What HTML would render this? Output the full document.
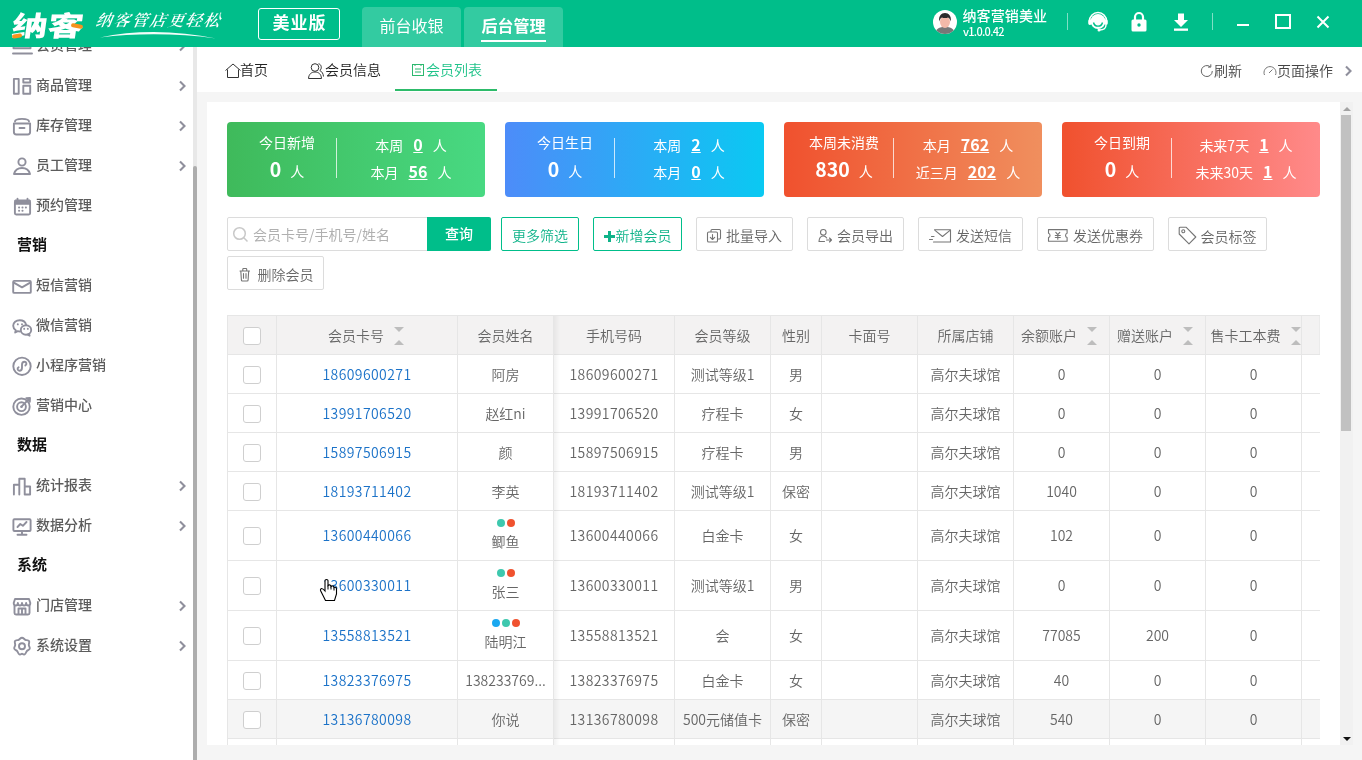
<!DOCTYPE html>
<html lang="zh-CN">
<head>
<meta charset="utf-8">
<title>纳客 - 会员列表</title>
<style>
*{box-sizing:border-box;margin:0;padding:0}
html,body{width:1362px;height:760px;overflow:hidden;background:#f5f5f5}
#hdr,#side,#tabs,#panel{will-change:transform}
body{font-family:"Liberation Sans","Noto Sans CJK SC",sans-serif;font-size:14px;color:#555;position:relative}
.abs{position:absolute}
/* header */
#hdr{position:absolute;left:0;top:0;width:1362px;height:47px;background:#00be8a;z-index:20}
#hdr .ver{position:absolute;left:258px;top:8px;width:82px;height:32px;border:1px solid #fff;border-radius:3px;color:#fff;font-weight:700;font-size:17px;letter-spacing:1px;padding-left:1px;line-height:30px;text-align:center}
#hdr .tab{position:absolute;top:7px;height:40px;width:99px;background:rgba(255,255,255,.2);border-radius:4px 4px 0 0;color:#fff;font-size:16px;line-height:39px;text-align:center}
#hdr .tab.on{font-weight:700}
#hdr .tab.on i{position:absolute;left:17px;right:17px;bottom:5px;height:2px;background:#fff}
#hdr .uname{position:absolute;left:962.500px;top:5.500px;color:#fff;font-size:14px;line-height:20px;font-weight:500;letter-spacing:.1px}
#hdr .uver{position:absolute;left:963px;top:24px;color:#fff;font-family:"Noto Sans CJK SC","Liberation Sans",sans-serif;font-size:11px;line-height:14px;font-weight:500;letter-spacing:-.7px}
#hdr .sep{position:absolute;top:13px;width:1px;height:17px;background:rgba(255,255,255,.5)}
/* sidebar */
#side{position:absolute;left:0;top:47px;width:193px;height:713px;background:#fff;overflow:hidden}
#side .it{position:absolute;left:0;width:193px;height:40px;line-height:40px;color:#5c5c5c;font-weight:500;font-size:14px;padding-left:36px}
#side .it svg.ic{position:absolute;left:11px;top:10px;width:22px;height:22px}
#side .it .ar{position:absolute;left:177px;top:15px;width:10px;height:12px}
#side .gp{position:absolute;left:17px;height:40px;line-height:40px;color:#111;font-weight:700;font-size:15px}
#sscroll{position:absolute;left:193px;top:47px;width:4px;height:713px;background:#e8e8e8}
#sscroll i{position:absolute;left:0;top:119px;width:4px;height:594px;background:#adadad;border-radius:2px 2px 0 0}
/* tabbar */
#tabs{position:absolute;left:197px;top:47px;width:1165px;height:45px;background:#fff}
#tabs .t{position:absolute;top:0;height:45px;line-height:45px;color:#222;font-size:14px;font-weight:350;white-space:nowrap;font-family:"Noto Sans CJK SC","Liberation Sans",sans-serif}
#tabs .t.on{color:#1fc389}
#tabs .ul{position:absolute;left:198px;top:42px;width:102px;height:2px;background:#2dbb6a}
/* panel */
#panel{position:absolute;left:207px;top:102px;width:1133px;height:643px;background:#fff;overflow:hidden}
#vscroll{position:absolute;left:1340px;top:102px;width:13px;height:643px;background:#f1f1f1}
#vscroll i{position:absolute;left:1px;top:13px;width:10px;height:316px;background:#c1c1c1}
#vscroll b{position:absolute;left:3px;width:0;height:0;border-left:4px solid transparent;border-right:4px solid transparent}
#vscroll .up{top:5px;border-bottom:4px solid #a3a3a3}
#vscroll .dn{top:635px;border-top:4px solid #111}
/* cards (coords relative to panel) */
.card{font-family:"Noto Sans CJK SC","Liberation Sans",sans-serif;position:absolute;top:20px;width:258px;height:75px;border-radius:4px;color:#fff}
.card .v{position:absolute;left:109px;top:16px;width:1px;height:40px;background:rgba(255,255,255,.75)}
.card .a{position:absolute;left:0;width:120px;text-align:center;white-space:nowrap}
.card .b{position:absolute;left:110px;width:148px;text-align:center;white-space:nowrap;font-size:14px}
.card b{font-weight:700}
.card u{font-weight:700;font-size:16px;text-decoration:underline;margin:0 10px}
/* toolbar */
.btn{font-weight:350;position:absolute;height:34px;border:1px solid #dcdcdc;border-radius:2px;background:#fff;color:#666;font-size:14px;line-height:35px;text-align:center;white-space:nowrap;font-family:"Noto Sans CJK SC","Liberation Sans",sans-serif}
.btn.g{border-color:#00be8a;color:#0fb389}
.plus{display:inline-block;position:relative;width:11px;height:11px;margin-right:1px;vertical-align:-1px}
.plus:before,.plus:after{content:"";position:absolute;background:#0fb389}
.plus:before{left:0;top:4px;width:11px;height:3px}
.plus:after{left:4px;top:0;width:3px;height:11px}
/* table */
#tbl{position:absolute;left:20px;top:213px;width:1093px;overflow:hidden;height:440px;border-left:1px solid #e6e6e6;border-top:1px solid #e6e6e6}
.r{position:absolute;left:0;width:1092px;border-bottom:1px solid #e6e6e6}
.r.h{background:#f3f2f2}
.r.hv{background:#f5f5f5}
.c{font-family:"Noto Sans CJK SC","Liberation Sans",sans-serif;position:absolute;top:0;height:100%;border-right:1px solid #e6e6e6;text-align:center;white-space:nowrap;overflow:hidden;color:#666;font-weight:350}
.c a{color:#1b72c8;text-decoration:none}
.cb{position:absolute;left:15px;width:18px;height:18px;border:1px solid #cfcfcf;border-radius:3px;background:#fff}

#hdr .logo{position:absolute;left:9px;top:7px;height:40px;width:80px}
#hdr .logo .lg{position:absolute;left:3px;top:0;color:#fff;font-weight:900;font-size:27.500px;line-height:40px;letter-spacing:0;transform:skewX(-8deg) scaleX(1.3);transform-origin:0 50%;white-space:nowrap}
#hdr .logo .o1{position:absolute;left:3px;top:27px;width:10px;height:3.500px;background:#f7931e;border-radius:2px;transform:rotate(-10deg)}
#hdr .logo .o2{position:absolute;left:62px;top:16.500px;width:12px;height:4px;background:#f7931e;border-radius:2px;transform:rotate(10deg)}
#hdr .slogan{position:absolute;left:96px;top:10px;color:#fff;font-family:"Liberation Serif","Noto Serif CJK SC",serif;font-style:italic;font-weight:600;font-size:16px;line-height:22px;letter-spacing:2px;white-space:nowrap;transform:skewX(-10deg)}
.st{display:inline-block;position:relative;width:10px;height:20px;vertical-align:middle;margin-left:10px;top:-1px}
.st i{position:absolute;left:0;border-left:5px solid transparent;border-right:5px solid transparent}
.st .d{top:1px;border-top:5px solid #bdbdbd}
.st .u{top:14px;border-bottom:5px solid #bdbdbd}
.dots{display:block;height:10px;line-height:10px;font-size:0}
.dots i{display:inline-block;width:8px;height:8px;border-radius:50%;margin:1px 1px 0;vertical-align:top}
.nf{font-family:"Noto Sans CJK SC","Liberation Sans",sans-serif}
</style>
</head>
<body>
<div id="hdr"><div class="logo"><span class="lg">纳客</span><i class="o1"></i><i class="o2"></i></div><div class="slogan">纳客管店更轻松</div><svg class="abs" style="left:96px;top:28px" width="130" height="14" viewBox="0 0 130 14"><path d="M4 9.500C40 1.500 82 2.500 120 10.500 82 5.200 40 5 4 9.500z" fill="#fff" opacity=".95"/></svg><div class="ver">美业版</div><div class="tab" style="left:362px">前台收银</div><div class="tab on" style="left:464px">后台管理<i></i></div><svg class="abs" style="left:932px;top:9px" width="26" height="26" viewBox="0 0 26 26"><defs><clipPath id="avc"><circle cx="13" cy="13" r="12"/></clipPath></defs><circle cx="13" cy="13" r="12" fill="#fff"/><g clip-path="url(#avc)"><path d="M3 26c0-6 4-8 10-8s10 2 10 8z" fill="#777"/><ellipse cx="13" cy="13" rx="5" ry="6" fill="#f3b9a9"/><path d="M7.300 12.500c-1-5.500 2-8.500 5.700-8.500s6.700 3 5.700 8.500c-.6-2.500-1.500-3.500-2.700-4-1.500.8-4.500.8-6 0-1.200.5-2.100 1.500-2.700 4z" fill="#2c2c2c"/></g></svg><div class="uname">纳客营销美业</div><div class="uver">v1.0.0.42</div><div class="sep" style="left:1067px"></div><svg class="abs" style="left:1086px;top:10px" width="24" height="24" viewBox="0 0 24 24"><circle cx="12" cy="11.500" r="7.500" fill="#fff"/><path d="M3.500 13v-2a8.500 8.500 0 0 1 17 0v2" stroke="#fff" stroke-width="1.600" fill="none"/><rect x="2.300" y="9.500" width="3.200" height="5.500" rx="1.400" fill="#fff"/><rect x="18.500" y="9.500" width="3.200" height="5.500" rx="1.400" fill="#fff"/><path d="M7.500 12.500a4.600 4.600 0 0 0 9 0" stroke="#00be8a" stroke-width="1.400" fill="none"/><path d="M20 15c0 3.500-3 5-6.500 5" stroke="#fff" stroke-width="1.400" fill="none"/><circle cx="13" cy="20" r="1.500" fill="#fff"/></svg><svg class="abs" style="left:1129px;top:10px" width="20" height="24" viewBox="0 0 20 24"><path d="M6 10v-3a4 4 0 0 1 8 0v3" stroke="#fff" stroke-width="2.200" fill="none"/><rect x="2.500" y="9.500" width="15" height="12" rx="1.500" fill="#fff"/><circle cx="10" cy="15" r="1.700" fill="#00be8a"/></svg><svg class="abs" style="left:1171px;top:10px" width="20" height="24" viewBox="0 0 20 24"><path d="M7 3.500h6v6.500h4l-7 7-7-7h4z" fill="#fff"/><rect x="3" y="18.500" width="14" height="2.300" fill="#fff"/></svg><div class="sep" style="left:1212px"></div><div class="abs" style="left:1237px;top:24px;width:12px;height:2px;background:#fff"></div><div class="abs" style="left:1275px;top:14px;width:16px;height:15px;border:2px solid #fff"></div><svg class="abs" style="left:1316px;top:15px" width="14" height="14" viewBox="0 0 14 14"><path d="M1.500 1.500l11 11M12.500 1.500l-11 11" stroke="#fff" stroke-width="2" fill="none"/></svg></div>
<div id="side"><div class="it" style="top:-22px"><svg class="ic" viewBox="0 0 22 22"><path d="M2.500 11v2.300h17v-2.300" stroke="#8f8f9c" stroke-width="1.900" fill="none" stroke-linecap="round" stroke-linejoin="round"/><path d="M2 18.500h19" stroke="#8f8f9c" stroke-width="1.900" fill="none" stroke-linecap="round" stroke-linejoin="round" stroke-width="2.800" stroke-linecap="butt"/></svg>会员管理<svg class="ar" viewBox="0 0 10 12"><path d="M3 1.500l4.500 4.500-4.500 4.500" stroke="#8f8f9c" stroke-width="2.100" fill="none"/></svg></div><div class="it" style="top:18px"><svg class="ic" viewBox="0 0 22 22"><rect x="2.900" y="3.900" width="4.800" height="14.800" stroke="#8f8f9c" stroke-width="1.900" fill="none" stroke-linecap="round" stroke-linejoin="round"/><rect x="12.300" y="3.900" width="6.900" height="3.600" stroke="#8f8f9c" stroke-width="1.900" fill="none" stroke-linecap="round" stroke-linejoin="round"/><rect x="12.300" y="10.800" width="6.900" height="7.900" stroke="#8f8f9c" stroke-width="1.900" fill="none" stroke-linecap="round" stroke-linejoin="round"/></svg>商品管理<svg class="ar" viewBox="0 0 10 12"><path d="M3 1.500l4.500 4.500-4.500 4.500" stroke="#8f8f9c" stroke-width="2.100" fill="none"/></svg></div><div class="it" style="top:58px"><svg class="ic" viewBox="0 0 22 22"><path d="M4 6.500c0-3.500 14-3.500 14 0" stroke="#8f8f9c" stroke-width="1.900" fill="none" stroke-linecap="round" stroke-linejoin="round" stroke-width="2.200"/><path d="M2.900 8.500h16.200v8.500a2.500 2.500 0 0 1-2.500 2.500h-11.200a2.500 2.500 0 0 1-2.500-2.500z" stroke="#8f8f9c" stroke-width="1.900" fill="none" stroke-linecap="round" stroke-linejoin="round"/><path d="M8.500 13h5" stroke="#8f8f9c" stroke-width="1.900" fill="none" stroke-linecap="round" stroke-linejoin="round" stroke-width="2.400"/></svg>库存管理<svg class="ar" viewBox="0 0 10 12"><path d="M3 1.500l4.500 4.500-4.500 4.500" stroke="#8f8f9c" stroke-width="2.100" fill="none"/></svg></div><div class="it" style="top:98px"><svg class="ic" viewBox="0 0 22 22"><circle cx="11" cy="7" r="3.600" stroke="#8f8f9c" stroke-width="1.900" fill="none" stroke-linecap="round" stroke-linejoin="round"/><path d="M3 19c1.200-4.500 4-6 8-6s6.800 1.500 8 6z" stroke="#8f8f9c" stroke-width="1.900" fill="none" stroke-linecap="round" stroke-linejoin="round"/></svg>员工管理<svg class="ar" viewBox="0 0 10 12"><path d="M3 1.500l4.500 4.500-4.500 4.500" stroke="#8f8f9c" stroke-width="2.100" fill="none"/></svg></div><div class="it" style="top:138px"><svg class="ic" viewBox="0 0 22 22"><rect x="3.900" y="6" width="15.200" height="13.500" rx="1.200" stroke="#8f8f9c" stroke-width="1.900" fill="none" stroke-linecap="round" stroke-linejoin="round"/><path d="M3.900 5h15.200v4.200h-15.200z" fill="#8f8f9c" stroke="#8f8f9c" stroke-width="1" stroke-linejoin="round"/><path d="M6.500 3.800v2M16.500 3.800v2" stroke="#8f8f9c" stroke-width="1.900" fill="none" stroke-linecap="round" stroke-linejoin="round" stroke-width="2.400"/><path d="M8 12.500h.2M11.400 12.500h.2M14.800 12.500h.2M8 15.800h.2M11.400 15.800h.2" stroke="#8f8f9c" stroke-width="1.900" fill="none" stroke-linecap="round" stroke-linejoin="round" stroke-width="2"/></svg>预约管理</div><div class="gp" style="top:178px">营销</div><div class="it" style="top:218px"><svg class="ic" viewBox="0 0 22 22"><rect x="2.200" y="5.900" width="17.600" height="12" rx="1" stroke="#8f8f9c" stroke-width="1.900" fill="none" stroke-linecap="round" stroke-linejoin="round" stroke-width="2"/><path d="M2.800 7.600l8.200 4.800 8.200-4.800" stroke="#8f8f9c" stroke-width="1.900" fill="none" stroke-linecap="round" stroke-linejoin="round" stroke-width="2"/></svg>短信营销</div><div class="it" style="top:258px"><svg class="ic" viewBox="0 0 22 22"><path d="M9 16.500c-.8 0-1.500-.1-2.200-.3l-2.600 1.300.6-2.300c-1.700-1.100-2.600-2.700-2.600-4.400 0-3.100 2.900-5.600 6.500-5.600 3.200 0 5.800 1.900 6.400 4.400" stroke="#8f8f9c" stroke-width="1.900" fill="none" stroke-linecap="round" stroke-linejoin="round" stroke-width="1.700"/><ellipse cx="15" cy="15" rx="5.200" ry="4.700" stroke="#8f8f9c" stroke-width="1.900" fill="none" stroke-linecap="round" stroke-linejoin="round" stroke-width="1.700"/><path d="M18 18.800l.6 1.900-2.200-1.200" stroke="#8f8f9c" stroke-width="1.900" fill="none" stroke-linecap="round" stroke-linejoin="round" stroke-width="1.500"/><path d="M13.200 13.800v.1M16.800 13.800v.1M6.800 9.300v.1M11 9.300v.1" stroke="#8f8f9c" stroke-width="1.900" fill="none" stroke-linecap="round" stroke-linejoin="round" stroke-width="1.600"/></svg>微信营销</div><div class="it" style="top:298px"><svg class="ic" viewBox="0 0 22 22"><circle cx="11" cy="11.300" r="8.700" stroke="#8f8f9c" stroke-width="1.900" fill="none" stroke-linecap="round" stroke-linejoin="round" stroke-width="1.700"/><path d="M11 12.800c0 1.700-1 3-2.500 3-2 0-2.600-2.600-.9-3.600M11 12.800v-3c0-1.700 1-3 2.500-3 2 0 2.600 2.600.9 3.600" stroke="#8f8f9c" stroke-width="1.900" fill="none" stroke-linecap="round" stroke-linejoin="round" stroke-width="1.700"/></svg>小程序营销</div><div class="it" style="top:338px"><svg class="ic" viewBox="0 0 22 22"><circle cx="10.500" cy="11.700" r="8.200" stroke="#8f8f9c" stroke-width="1.900" fill="none" stroke-linecap="round" stroke-linejoin="round" stroke-width="1.800"/><circle cx="10.500" cy="11.700" r="4.400" stroke="#8f8f9c" stroke-width="1.900" fill="none" stroke-linecap="round" stroke-linejoin="round" stroke-width="1.800"/><circle cx="10.500" cy="11.700" r="1.300" fill="#8f8f9c"/><path d="M10.500 11.700l8-8.200M15.300 3.200l3.700-.2-.2 3.700" stroke="#8f8f9c" stroke-width="1.900" fill="none" stroke-linecap="round" stroke-linejoin="round" stroke-width="1.800"/></svg>营销中心</div><div class="gp" style="top:378px">数据</div><div class="it" style="top:418px"><svg class="ic" viewBox="0 0 22 22"><path d="M2.900 19.500v-9.700h5.400v9.700M8.300 19.500v-15.700h5.400v15.700M13.700 19.500v-8h5.400v8z" stroke="#8f8f9c" stroke-width="1.900" fill="none" stroke-linecap="round" stroke-linejoin="round"/></svg>统计报表<svg class="ar" viewBox="0 0 10 12"><path d="M3 1.500l4.500 4.500-4.500 4.500" stroke="#8f8f9c" stroke-width="2.100" fill="none"/></svg></div><div class="it" style="top:458px"><svg class="ic" viewBox="0 0 22 22"><rect x="2.400" y="4.200" width="17.200" height="11.800" rx="1" stroke="#8f8f9c" stroke-width="1.900" fill="none" stroke-linecap="round" stroke-linejoin="round" stroke-width="2"/><path d="M6.500 12l2.800-3 2.600 1.800 3.600-3.800" stroke="#8f8f9c" stroke-width="1.900" fill="none" stroke-linecap="round" stroke-linejoin="round" stroke-width="1.600"/><path d="M11 16v3.500M6.500 19.700h9" stroke="#8f8f9c" stroke-width="1.900" fill="none" stroke-linecap="round" stroke-linejoin="round" stroke-width="2"/></svg>数据分析<svg class="ar" viewBox="0 0 10 12"><path d="M3 1.500l4.500 4.500-4.500 4.500" stroke="#8f8f9c" stroke-width="2.100" fill="none"/></svg></div><div class="gp" style="top:498px">系统</div><div class="it" style="top:538px"><svg class="ic" viewBox="0 0 22 22"><path d="M3.500 10.500v7.500a1.500 1.500 0 0 0 1.500 1.500h12a1.500 1.500 0 0 0 1.500-1.500v-7.500" stroke="#8f8f9c" stroke-width="1.900" fill="none" stroke-linecap="round" stroke-linejoin="round"/><path d="M2.700 8l1.300-4h14l1.300 4c0 3.300-4.100 3.300-4.150 0 0 3.300-4.100 3.300-4.150 0 0 3.300-4.100 3.300-4.150 0 0 3.300-4.150 3.300-4.150 0z" stroke="#8f8f9c" stroke-width="1.900" fill="none" stroke-linecap="round" stroke-linejoin="round"/><path d="M7.500 19v-5.500h7v5.500M11 13.500v5.500" stroke="#8f8f9c" stroke-width="1.900" fill="none" stroke-linecap="round" stroke-linejoin="round"/></svg>门店管理<svg class="ar" viewBox="0 0 10 12"><path d="M3 1.500l4.500 4.500-4.500 4.500" stroke="#8f8f9c" stroke-width="2.100" fill="none"/></svg></div><div class="it" style="top:578px"><svg class="ic" viewBox="0 0 22 22"><path d="M11 2.700c1.500 0 2 1.500 3.300 2.100s2.800-.2 3.700 1.200c.8 1.300-.3 2.500-.2 4s1.400 2.300.9 3.700c-.5 1.400-2 1.300-2.900 2.400s-.8 2.700-2.200 3.300c-1.300.5-2.100-.8-2.600-.8s-1.300 1.300-2.600.8c-1.400-.6-1.300-2.200-2.200-3.300s-2.400-1-2.900-2.400c-.5-1.400.8-2.200.9-3.700s-1-2.700-.2-4c.9-1.400 2.400-.6 3.700-1.200s1.800-2.100 3.300-2.100z" stroke="#8f8f9c" stroke-width="1.900" fill="none" stroke-linecap="round" stroke-linejoin="round"/><circle cx="11" cy="11.300" r="3" stroke="#8f8f9c" stroke-width="1.900" fill="none" stroke-linecap="round" stroke-linejoin="round"/></svg>系统设置<svg class="ar" viewBox="0 0 10 12"><path d="M3 1.500l4.500 4.500-4.500 4.500" stroke="#8f8f9c" stroke-width="2.100" fill="none"/></svg></div></div>
<div id="sscroll"><i></i></div>
<div id="tabs"><div class="t" style="left:28px"><svg class="abs" style="left:0;top:15.500px" width="16" height="16" viewBox="0 0 16 16"><path d="M.5 7.500l7.500-6.500 7.500 6.500M2.500 6.500v8h11v-8" stroke="#333" stroke-width="1" fill="none"/></svg><span style="margin-left:15px">首页</span></div><div class="t" style="left:111px"><svg class="abs" style="left:0;top:15.500px" width="17" height="16" viewBox="0 0 17 16"><circle cx="7" cy="4.500" r="3.800" stroke="#333" stroke-width="1" fill="none"/><path d="M.5 15.500c.3-4.500 3-6.500 6.500-6.500s6.200 2 6.500 6.500z" stroke="#333" stroke-width="1" fill="none"/><path d="M10.500 .8c3 .3 3.800 5 1.300 6.700 2.300 1 3.500 3.500 3.700 6" stroke="#333" stroke-width="1" fill="none"/></svg><span style="margin-left:17px">会员信息</span></div><div class="t on" style="left:214px"><svg class="abs" style="left:0;top:16px" width="14" height="14" viewBox="0 0 14 14"><rect x="1.500" y="1.500" width="11" height="11" stroke="#2cb86f" fill="none"/><path d="M4 1v2M10 1v2M4 6h6M4 9h6" stroke="#2cb86f" fill="none"/></svg><span style="margin-left:15px">会员列表</span></div><div class="ul"></div><div class="t" style="left:1004px;color:#444;line-height:47px"><svg class="abs" style="left:-1px;top:17px" width="14" height="14" viewBox="0 0 14 14"><path d="M12.300 7a5.500 5.500 0 1 1-2-4.200M10.800 .3v2.800h-2.800" stroke="#666" fill="none"/></svg><span style="margin-left:13px">刷新</span></div><div class="t" style="left:1066px;color:#444;line-height:47px"><svg class="abs" style="left:0;top:17px" width="14" height="13" viewBox="0 0 14 13"><path d="M1.500 11a6 6 0 1 1 11 0" stroke="#777" fill="none"/><path d="M6 9l3.500-3.500" stroke="#777" fill="none"/></svg><span style="margin-left:14px">页面操作</span></div><svg class="abs" style="left:1146px;top:17.500px" width="10" height="12" viewBox="0 0 10 12"><path d="M3 1.500l4.500 4.500-4.500 4.500" stroke="#8f8f9c" stroke-width="2.100" fill="none"/></svg></div>
<div id="panel"><div class="card" style="left:20px;width:258px;background:linear-gradient(90deg,#3fba5b,#48d982)"><div class="a" style="top:9px;font-size:14px;line-height:22px">今日新增</div><div class="a" style="top:34px;font-size:14px;line-height:26px"><b style="font-size:19.500px;margin-right:9px">0</b>人</div><i class="v"></i><div class="b" style="top:10.500px;line-height:22px">本周<u>0</u>人</div><div class="b" style="top:38.300px;line-height:22px">本月<u>56</u>人</div></div><div class="card" style="left:298px;width:259px;background:linear-gradient(90deg,#4d8cf9,#0ac9f2)"><div class="a" style="top:9px;font-size:14px;line-height:22px">今日生日</div><div class="a" style="top:34px;font-size:14px;line-height:26px"><b style="font-size:19.500px;margin-right:9px">0</b>人</div><i class="v"></i><div class="b" style="top:10.500px;line-height:22px">本周<u>2</u>人</div><div class="b" style="top:38.300px;line-height:22px">本月<u>0</u>人</div></div><div class="card" style="left:577px;width:258px;background:linear-gradient(90deg,#f0512e,#f08f5e)"><div class="a" style="top:9px;font-size:14px;line-height:22px">本周未消费</div><div class="a" style="top:34px;font-size:14px;line-height:26px"><b style="font-size:19.500px;margin-right:9px">830</b>人</div><i class="v"></i><div class="b" style="top:10.500px;line-height:22px">本月<u>762</u>人</div><div class="b" style="top:38.300px;line-height:22px">近三月<u>202</u>人</div></div><div class="card" style="left:855px;width:258px;background:linear-gradient(90deg,#f0512e,#ff8a8a)"><div class="a" style="top:9px;font-size:14px;line-height:22px">今日到期</div><div class="a" style="top:34px;font-size:14px;line-height:26px"><b style="font-size:19.500px;margin-right:9px">0</b>人</div><i class="v"></i><div class="b" style="top:10.500px;line-height:22px">未来7天<u>1</u>人</div><div class="b" style="top:38.300px;line-height:22px">未来30天<u>1</u>人</div></div><div class="abs nf" style="left:20px;top:115px;width:201px;height:34px;border:1px solid #dcdcdc;border-radius:2px 0 0 2px;color:#b0b0b0;font-size:14px;line-height:32px;padding-left:25px;white-space:nowrap"><svg class="abs" style="left:4px;top:8px" width="17" height="17" viewBox="0 0 17 17"><circle cx="7.500" cy="7.500" r="5.800" stroke="#c8c8c8" stroke-width="1.500" fill="none"/><path d="M11.800 11.800l3.700 3.700" stroke="#c8c8c8" stroke-width="1.500"/></svg>会员卡号/手机号/姓名</div><div class="abs" style="left:220px;top:115px;width:64px;height:34px;background:#00be8a;border-radius:0 2px 2px 0;color:#fff;font-weight:500;font-size:14px;line-height:35px;text-align:center">查询</div><div class="btn g" style="left:294px;top:115px;width:78px">更多筛选</div><div class="btn g" style="left:386px;top:115px;width:89px"><i class="plus"></i>新增会员</div><div class="btn " style="left:489px;top:115px;width:97px"><svg width="14" height="14" viewBox="0 0 14 14" style="overflow:visible;vertical-align:-2px;margin-right:5px"><path d="M4 2.500v-1a1 1 0 0 1 1-1h7.500a1 1 0 0 1 1 1v7.500a1 1 0 0 1-1 1h-1" stroke="#757575" stroke-width="1.100" fill="none" stroke-linejoin="round" stroke-linecap="round"/><rect x=".5" y="3" width="10" height="10" rx="1.300" stroke="#757575" stroke-width="1.100" fill="none" stroke-linejoin="round" stroke-linecap="round"/><path d="M5.500 5.500v4.800M3.300 8.300l2.200 2.200 2.200-2.200" stroke="#757575" stroke-width="1.100" fill="none" stroke-linejoin="round" stroke-linecap="round"/></svg>批量导入</div><div class="btn " style="left:600px;top:115px;width:97px"><svg width="14" height="14" viewBox="0 0 14 14" style="overflow:visible;vertical-align:-2px;margin-right:5px"><circle cx="5.300" cy="3.300" r="2.800" stroke="#757575" stroke-width="1.100" fill="none" stroke-linejoin="round" stroke-linecap="round"/><path d="M1 12.500c.2-3.500 2-5.500 4.300-5.500 1.500 0 2.700.8 3.400 2M1 12.500h5.500" stroke="#757575" stroke-width="1.100" fill="none" stroke-linejoin="round" stroke-linecap="round"/><path d="M8.500 11h5M11.500 9l2 2-2 2" stroke="#757575" stroke-width="1.100" fill="none" stroke-linejoin="round" stroke-linecap="round"/></svg>会员导出</div><div class="btn " style="left:711px;top:115px;width:105px"><svg width="22" height="14" viewBox="0 0 22 14" style="overflow:visible;vertical-align:-2px;margin-right:5px"><path d="M5.500 .7h16v12.300h-17" stroke="#757575" stroke-width="1.100" fill="none" stroke-linejoin="round" stroke-linecap="round"/><path d="M6 1.300l7.500 6.200 7.500-6.200" stroke="#757575" stroke-width="1.100" fill="none" stroke-linejoin="round" stroke-linecap="round"/><path d="M2.500 7.500h2.500M.5 10.500h3" stroke="#757575" stroke-width="1.100" fill="none" stroke-linejoin="round" stroke-linecap="round"/></svg>发送短信</div><div class="btn " style="left:830px;top:115px;width:117px"><svg width="22" height="14" viewBox="1 0 22 14" style="overflow:visible;vertical-align:-2px;margin-right:3px"><path d="M1.500 .6h18.600v3.700a2.200 2.200 0 0 0 0 4.200v3.700h-18.600v-3.700a2.200 2.200 0 0 0 0-4.200z" stroke="#757575" stroke-width="1.100" fill="none" stroke-linejoin="round" stroke-linecap="round"/><path d="M8.800 3.300l2 2.400 2-2.400M10.800 5.700v4.600M8.300 6.500h5M8.300 8.500h5" stroke="#757575" stroke-width="1.100" fill="none" stroke-linejoin="round" stroke-linecap="round"/></svg>发送优惠券</div><div class="btn " style="left:961px;top:115px;width:99px"><svg width="17" height="17" viewBox="0 0 17 17" style="overflow:visible;vertical-align:-3px;margin-right:5px"><path d="M.2 1.200a1 1 0 0 1 1-1h5.800l9.800 9.800-6.800 6.800-9.800-9.800z" stroke="#757575" stroke-width="1.100" fill="none" stroke-linejoin="round" stroke-linecap="round"/><circle cx="4.300" cy="4.300" r="1.500" stroke="#757575" stroke-width="1.100" fill="none" stroke-linejoin="round" stroke-linecap="round"/></svg><span style="position:relative;top:1px">会员标签</span></div><div class="btn " style="left:20px;top:154px;width:97px"><svg width="14" height="14" viewBox="0 0 14 14" style="overflow:visible;vertical-align:-2px;margin-right:6px"><path d="M2 3h9.500M4.800 3v-1.800a.7 .7 0 0 1 .7-.7h2.500a.7 .7 0 0 1 .7 .7v1.800M2.800 3l.6 9a1 1 0 0 0 1 1h4.700a1 1 0 0 0 1-1l.6-9M5.500 5.500v4.800M8 5.500v4.800" stroke="#757575" stroke-width="1.100" fill="none" stroke-linejoin="round" stroke-linecap="round"/></svg>删除会员</div><div id="tbl"><div class="r h" style="top:0;height:39px"><div class="c" style="left:0px;width:49px;line-height:38px;"><i class="cb" style="top:11px"></i></div><div class="c" style="left:49px;width:181px;line-height:38px;padding-right:2px;">会员卡号<span class="st"><i class="d"></i><i class="u"></i></span></div><div class="c" style="left:230px;width:96px;line-height:38px;">会员姓名</div><div class="c" style="left:326px;width:121px;line-height:38px;">手机号码</div><div class="c" style="left:447px;width:96px;line-height:38px;">会员等级</div><div class="c" style="left:543px;width:51px;line-height:38px;">性别</div><div class="c" style="left:594px;width:96px;line-height:38px;">卡面号</div><div class="c" style="left:690px;width:96px;line-height:38px;">所属店铺</div><div class="c" style="left:786px;width:96px;line-height:38px;padding-right:5px;">余额账户<span class="st"><i class="d"></i><i class="u"></i></span></div><div class="c" style="left:882px;width:96px;line-height:38px;padding-right:5px;">赠送账户<span class="st"><i class="d"></i><i class="u"></i></span></div><div class="c" style="left:978px;width:96px;line-height:38px;padding-left:4px;">售卡工本费<span class="st"><i class="d"></i><i class="u"></i></span></div><div class="c" style="left:1074px;width:18px;line-height:38px;border-right-color:#ebebeb;"></div></div><div class="r " style="top:39px;height:39px"><div class="c" style="left:0px;width:49px;line-height:38px;"><i class="cb" style="top:11px"></i></div><div class="c" style="left:49px;width:181px;line-height:38px;letter-spacing:.4px;"><a>18609600271</a></div><div class="c" style="left:230px;width:96px;line-height:38px;">阿房</div><div class="c" style="left:326px;width:121px;line-height:38px;letter-spacing:.4px;">18609600271</div><div class="c" style="left:447px;width:96px;line-height:38px;">测试等级1</div><div class="c" style="left:543px;width:51px;line-height:38px;">男</div><div class="c" style="left:594px;width:96px;line-height:38px;"></div><div class="c" style="left:690px;width:96px;line-height:38px;">高尔夫球馆</div><div class="c" style="left:786px;width:96px;line-height:38px;">0</div><div class="c" style="left:882px;width:96px;line-height:38px;">0</div><div class="c" style="left:978px;width:96px;line-height:38px;">0</div><div class="c" style="left:1074px;width:18px;line-height:38px;border-right-color:transparent;"></div></div><div class="r " style="top:78px;height:39px"><div class="c" style="left:0px;width:49px;line-height:38px;"><i class="cb" style="top:11px"></i></div><div class="c" style="left:49px;width:181px;line-height:38px;letter-spacing:.4px;"><a>13991706520</a></div><div class="c" style="left:230px;width:96px;line-height:38px;">赵红ni</div><div class="c" style="left:326px;width:121px;line-height:38px;letter-spacing:.4px;">13991706520</div><div class="c" style="left:447px;width:96px;line-height:38px;">疗程卡</div><div class="c" style="left:543px;width:51px;line-height:38px;">女</div><div class="c" style="left:594px;width:96px;line-height:38px;"></div><div class="c" style="left:690px;width:96px;line-height:38px;">高尔夫球馆</div><div class="c" style="left:786px;width:96px;line-height:38px;">0</div><div class="c" style="left:882px;width:96px;line-height:38px;">0</div><div class="c" style="left:978px;width:96px;line-height:38px;">0</div><div class="c" style="left:1074px;width:18px;line-height:38px;border-right-color:transparent;"></div></div><div class="r " style="top:117px;height:39px"><div class="c" style="left:0px;width:49px;line-height:38px;"><i class="cb" style="top:11px"></i></div><div class="c" style="left:49px;width:181px;line-height:38px;letter-spacing:.4px;"><a>15897506915</a></div><div class="c" style="left:230px;width:96px;line-height:38px;">颜</div><div class="c" style="left:326px;width:121px;line-height:38px;letter-spacing:.4px;">15897506915</div><div class="c" style="left:447px;width:96px;line-height:38px;">疗程卡</div><div class="c" style="left:543px;width:51px;line-height:38px;">男</div><div class="c" style="left:594px;width:96px;line-height:38px;"></div><div class="c" style="left:690px;width:96px;line-height:38px;">高尔夫球馆</div><div class="c" style="left:786px;width:96px;line-height:38px;">0</div><div class="c" style="left:882px;width:96px;line-height:38px;">0</div><div class="c" style="left:978px;width:96px;line-height:38px;">0</div><div class="c" style="left:1074px;width:18px;line-height:38px;border-right-color:transparent;"></div></div><div class="r " style="top:156px;height:39px"><div class="c" style="left:0px;width:49px;line-height:38px;"><i class="cb" style="top:11px"></i></div><div class="c" style="left:49px;width:181px;line-height:38px;letter-spacing:.4px;"><a>18193711402</a></div><div class="c" style="left:230px;width:96px;line-height:38px;">李英</div><div class="c" style="left:326px;width:121px;line-height:38px;letter-spacing:.4px;">18193711402</div><div class="c" style="left:447px;width:96px;line-height:38px;">测试等级1</div><div class="c" style="left:543px;width:51px;line-height:38px;">保密</div><div class="c" style="left:594px;width:96px;line-height:38px;"></div><div class="c" style="left:690px;width:96px;line-height:38px;">高尔夫球馆</div><div class="c" style="left:786px;width:96px;line-height:38px;">1040</div><div class="c" style="left:882px;width:96px;line-height:38px;">0</div><div class="c" style="left:978px;width:96px;line-height:38px;">0</div><div class="c" style="left:1074px;width:18px;line-height:38px;border-right-color:transparent;"></div></div><div class="r " style="top:195px;height:50px"><div class="c" style="left:0px;width:49px;line-height:49px;"><i class="cb" style="top:16px"></i></div><div class="c" style="left:49px;width:181px;line-height:49px;letter-spacing:.4px;"><a>13600440066</a></div><div class="c" style="left:230px;width:96px;line-height:26px;padding-top:7px"><span class="dots"><i style="background:#3ec8ae"></i><i style="background:#f0522f"></i></span>鲫鱼</div><div class="c" style="left:326px;width:121px;line-height:49px;letter-spacing:.4px;">13600440066</div><div class="c" style="left:447px;width:96px;line-height:49px;">白金卡</div><div class="c" style="left:543px;width:51px;line-height:49px;">女</div><div class="c" style="left:594px;width:96px;line-height:49px;"></div><div class="c" style="left:690px;width:96px;line-height:49px;">高尔夫球馆</div><div class="c" style="left:786px;width:96px;line-height:49px;">102</div><div class="c" style="left:882px;width:96px;line-height:49px;">0</div><div class="c" style="left:978px;width:96px;line-height:49px;">0</div><div class="c" style="left:1074px;width:18px;line-height:49px;border-right-color:transparent;"></div></div><div class="r " style="top:245px;height:50px"><div class="c" style="left:0px;width:49px;line-height:49px;"><i class="cb" style="top:16px"></i></div><div class="c" style="left:49px;width:181px;line-height:49px;letter-spacing:.4px;"><a>13600330011</a></div><div class="c" style="left:230px;width:96px;line-height:26px;padding-top:7px"><span class="dots"><i style="background:#3ec8ae"></i><i style="background:#f0522f"></i></span>张三</div><div class="c" style="left:326px;width:121px;line-height:49px;letter-spacing:.4px;">13600330011</div><div class="c" style="left:447px;width:96px;line-height:49px;">测试等级1</div><div class="c" style="left:543px;width:51px;line-height:49px;">男</div><div class="c" style="left:594px;width:96px;line-height:49px;"></div><div class="c" style="left:690px;width:96px;line-height:49px;">高尔夫球馆</div><div class="c" style="left:786px;width:96px;line-height:49px;">0</div><div class="c" style="left:882px;width:96px;line-height:49px;">0</div><div class="c" style="left:978px;width:96px;line-height:49px;">0</div><div class="c" style="left:1074px;width:18px;line-height:49px;border-right-color:transparent;"></div></div><div class="r " style="top:295px;height:50px"><div class="c" style="left:0px;width:49px;line-height:49px;"><i class="cb" style="top:16px"></i></div><div class="c" style="left:49px;width:181px;line-height:49px;letter-spacing:.4px;"><a>13558813521</a></div><div class="c" style="left:230px;width:96px;line-height:26px;padding-top:7px"><span class="dots"><i style="background:#1aa8f0"></i><i style="background:#3ec8ae"></i><i style="background:#f0522f"></i></span>陆明江</div><div class="c" style="left:326px;width:121px;line-height:49px;letter-spacing:.4px;">13558813521</div><div class="c" style="left:447px;width:96px;line-height:49px;">会</div><div class="c" style="left:543px;width:51px;line-height:49px;">女</div><div class="c" style="left:594px;width:96px;line-height:49px;"></div><div class="c" style="left:690px;width:96px;line-height:49px;">高尔夫球馆</div><div class="c" style="left:786px;width:96px;line-height:49px;">77085</div><div class="c" style="left:882px;width:96px;line-height:49px;">200</div><div class="c" style="left:978px;width:96px;line-height:49px;">0</div><div class="c" style="left:1074px;width:18px;line-height:49px;border-right-color:transparent;"></div></div><div class="r " style="top:345px;height:39px"><div class="c" style="left:0px;width:49px;line-height:38px;"><i class="cb" style="top:11px"></i></div><div class="c" style="left:49px;width:181px;line-height:38px;letter-spacing:.4px;"><a>13823376975</a></div><div class="c" style="left:230px;width:96px;line-height:38px;">138233769...</div><div class="c" style="left:326px;width:121px;line-height:38px;letter-spacing:.4px;">13823376975</div><div class="c" style="left:447px;width:96px;line-height:38px;">白金卡</div><div class="c" style="left:543px;width:51px;line-height:38px;">女</div><div class="c" style="left:594px;width:96px;line-height:38px;"></div><div class="c" style="left:690px;width:96px;line-height:38px;">高尔夫球馆</div><div class="c" style="left:786px;width:96px;line-height:38px;">40</div><div class="c" style="left:882px;width:96px;line-height:38px;">0</div><div class="c" style="left:978px;width:96px;line-height:38px;">0</div><div class="c" style="left:1074px;width:18px;line-height:38px;border-right-color:transparent;"></div></div><div class="r hv" style="top:384px;height:39px"><div class="c" style="left:0px;width:49px;line-height:38px;"><i class="cb" style="top:11px"></i></div><div class="c" style="left:49px;width:181px;line-height:38px;letter-spacing:.4px;"><a>13136780098</a></div><div class="c" style="left:230px;width:96px;line-height:38px;">你说</div><div class="c" style="left:326px;width:121px;line-height:38px;letter-spacing:.4px;">13136780098</div><div class="c" style="left:447px;width:96px;line-height:38px;">500元储值卡</div><div class="c" style="left:543px;width:51px;line-height:38px;">保密</div><div class="c" style="left:594px;width:96px;line-height:38px;"></div><div class="c" style="left:690px;width:96px;line-height:38px;">高尔夫球馆</div><div class="c" style="left:786px;width:96px;line-height:38px;">540</div><div class="c" style="left:882px;width:96px;line-height:38px;">0</div><div class="c" style="left:978px;width:96px;line-height:38px;">0</div><div class="c" style="left:1074px;width:18px;line-height:38px;border-right-color:transparent;"></div></div><div class="r " style="top:423px;height:39px"><div class="c" style="left:0px;width:49px;line-height:38px;"><i class="cb" style="top:11px"></i></div><div class="c" style="left:49px;width:181px;line-height:38px;"><a></a></div><div class="c" style="left:230px;width:96px;line-height:38px;"></div><div class="c" style="left:326px;width:121px;line-height:38px;"></div><div class="c" style="left:447px;width:96px;line-height:38px;"></div><div class="c" style="left:543px;width:51px;line-height:38px;"></div><div class="c" style="left:594px;width:96px;line-height:38px;"></div><div class="c" style="left:690px;width:96px;line-height:38px;"></div><div class="c" style="left:786px;width:96px;line-height:38px;"></div><div class="c" style="left:882px;width:96px;line-height:38px;"></div><div class="c" style="left:978px;width:96px;line-height:38px;"></div><div class="c" style="left:1074px;width:18px;line-height:38px;border-right-color:transparent;"></div></div><div class="abs" style="left:326px;top:0;width:6px;height:440px;background:linear-gradient(90deg,rgba(0,0,0,.05),rgba(0,0,0,0))"></div></div><svg class="abs" style="left:112px;top:476px" width="19" height="24" viewBox="-1 -1 19 24"><path d="M5 1.500Q5 .5 6.500 .5Q8 .5 8 1.500L8 6.500Q9 5.500 10 6Q11 6.500 11 7.500Q12 6.500 13 7Q14 7.500 14 8.500Q15 8 16 8.500Q16.500 9 16.500 10.500L16.500 15L14.500 21.500L5.500 21.500L.5 11.500Q0 10 1.500 9.500Q3 9.500 5 12Z" fill="#fff" stroke="#000" stroke-width="1.100"/><path d="M8 6.500v4M11 7.500v3M14 8.500v3" stroke="#000" stroke-width="1" fill="none"/></svg></div>
<div id="vscroll"><b class="up"></b><i></i><b class="dn"></b></div>
</body>
</html>
